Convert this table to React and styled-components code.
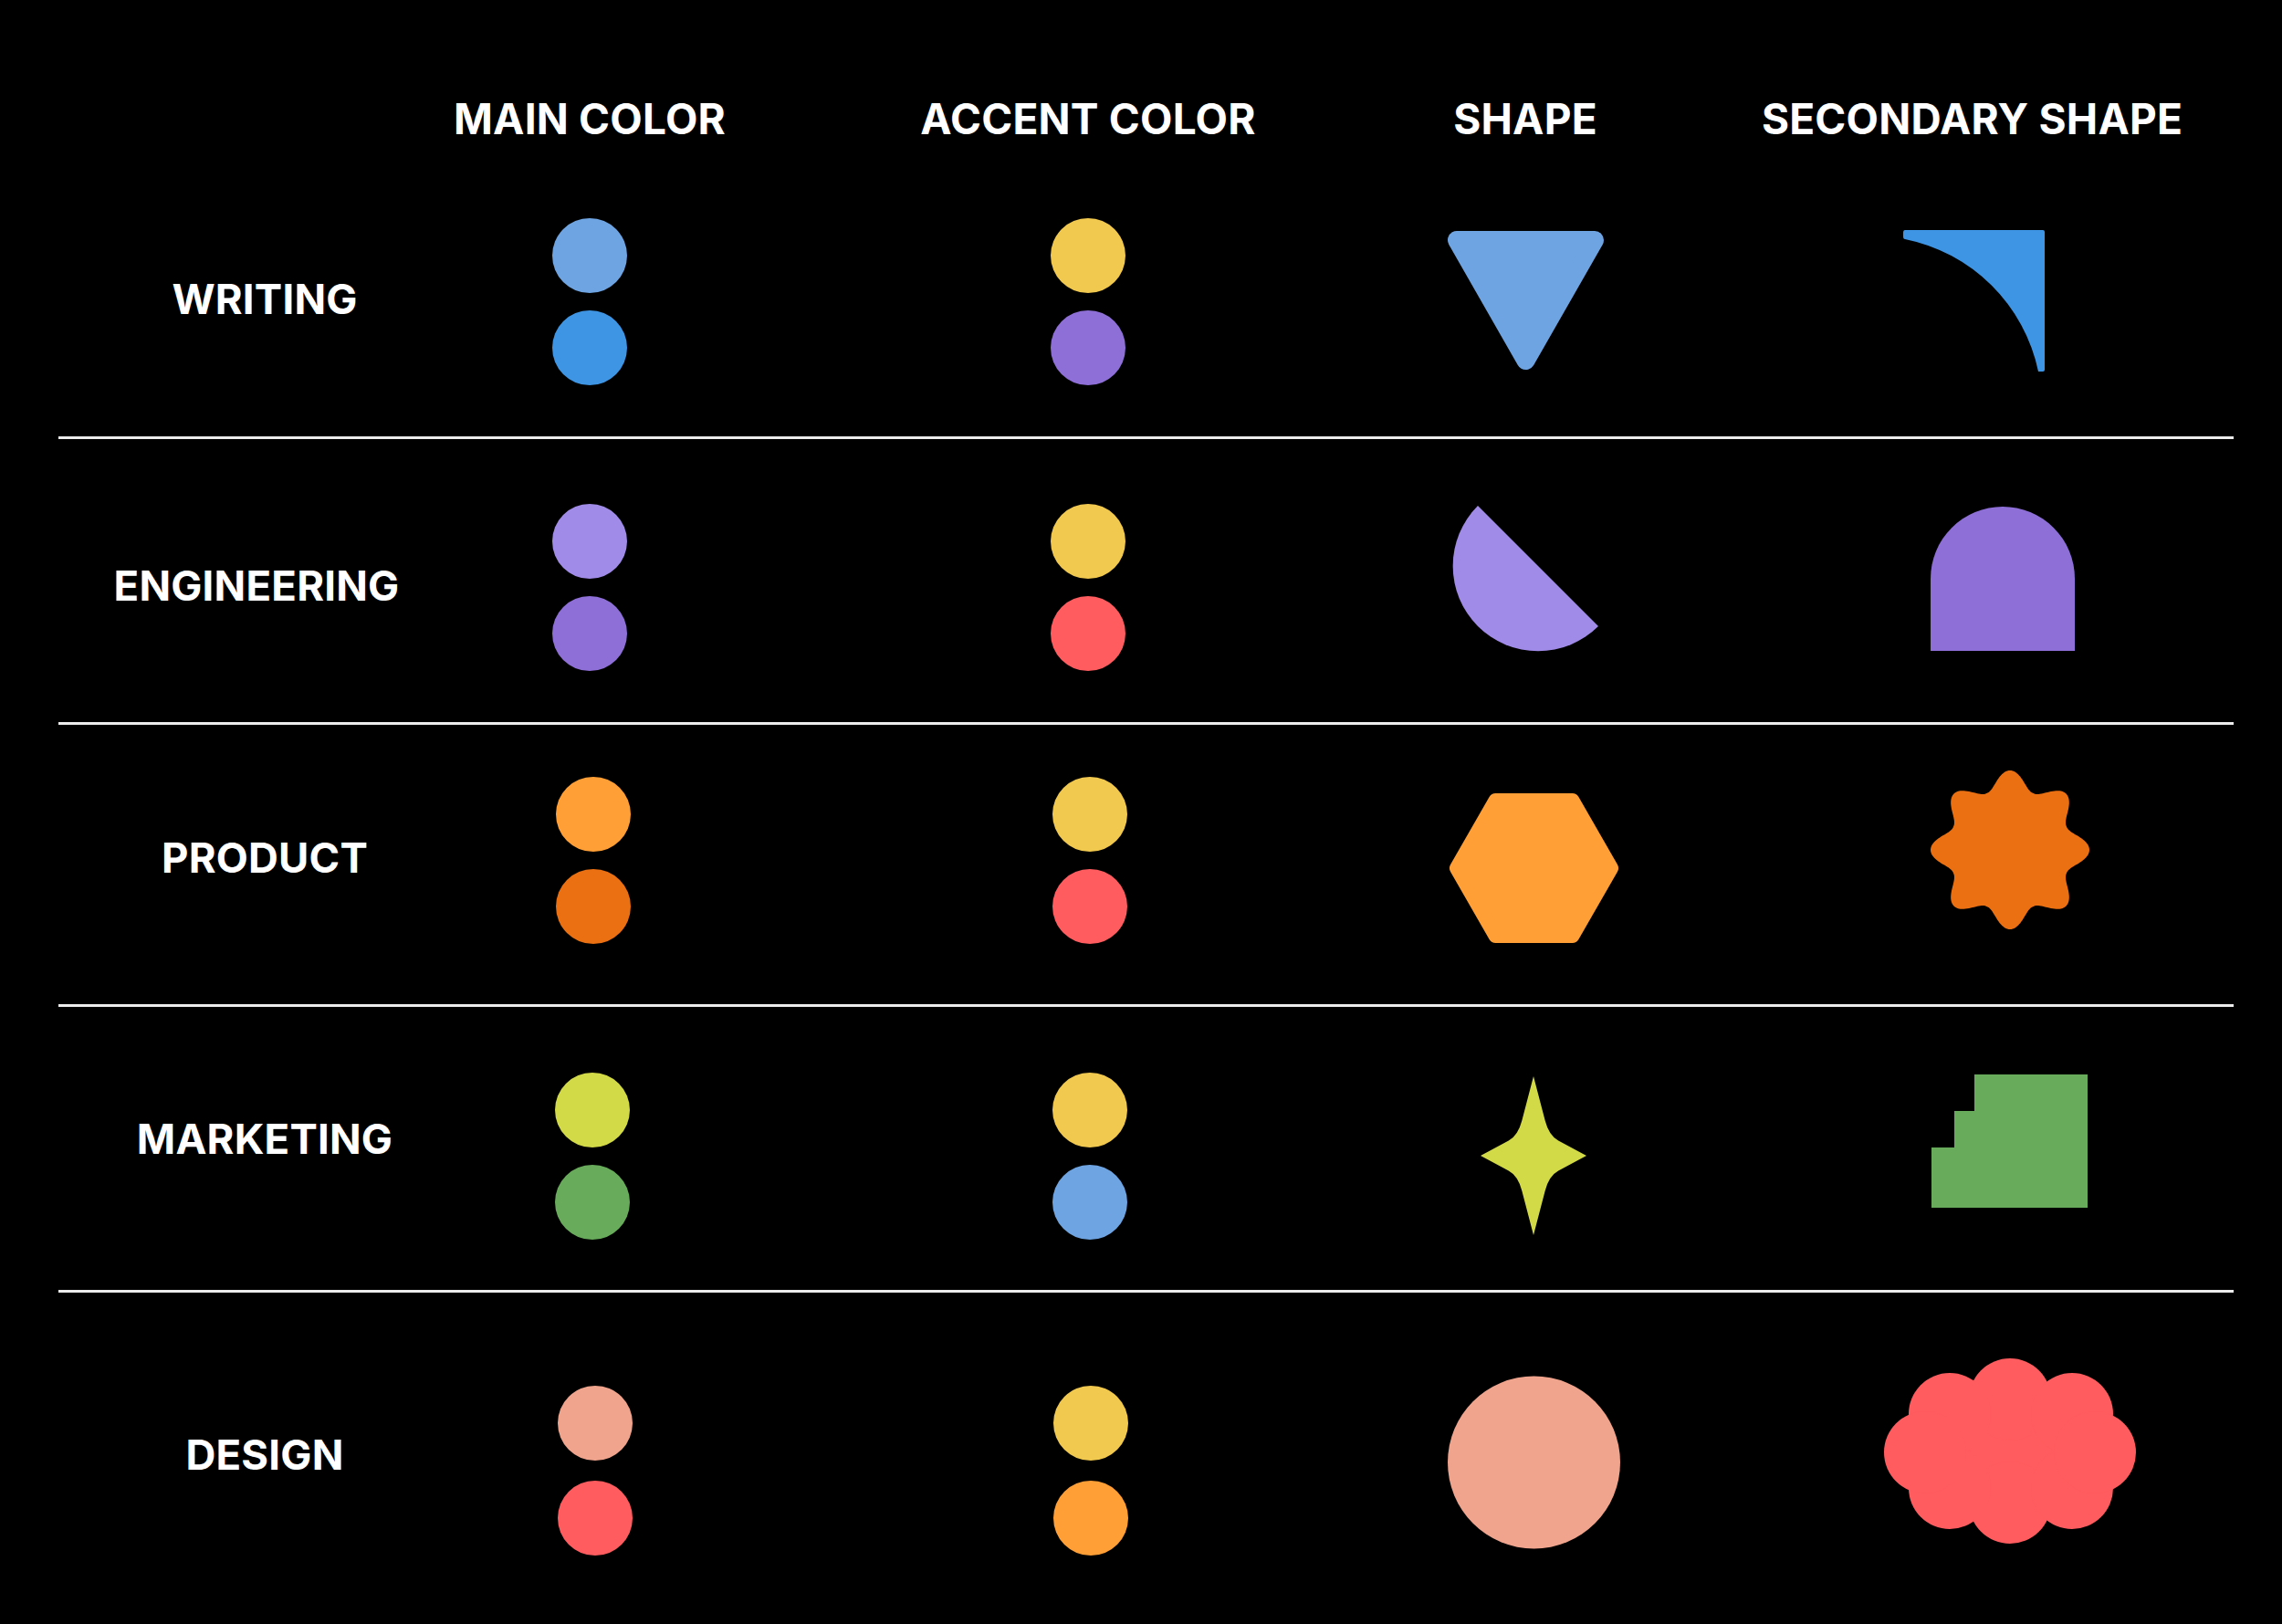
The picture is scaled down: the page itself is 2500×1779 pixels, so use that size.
import React from 'react';
import styled, { createGlobalStyle } from 'styled-components';

const Global = createGlobalStyle`
  html, body { margin: 0; padding: 0; background: #000; }
  body { font-family: Inter, "Liberation Sans", sans-serif; color: #fff; overflow: hidden; }
`;

const C = {
  lightBlue: '#6EA4E2',
  blue: '#3E95E4',
  yellow: '#F2C94F',
  purple: '#8E6FD8',
  lavender: '#A18BE8',
  red: '#FF5C5F',
  orange: '#FF9F36',
  darkOrange: '#EA7011',
  lime: '#D3DA48',
  green: '#68AC5B',
  salmon: '#F0A48D',
};

const COLS = '452px 260px 832px 126px 1fr';

const Page = styled.main`
  width: 2500px;
  height: 1779px;
  box-sizing: border-box;
  padding: 0 53px 0 64px;
  background: #000;
  display: flex;
  flex-direction: column;
`;

const HeaderRow = styled.header`
  display: grid;
  grid-template-columns: ${COLS};
  height: 75px;
  padding-top: 107px;
`;

const Cell = styled.div`
  display: flex;
  justify-content: center;
  align-items: ${p => (p.$top ? 'flex-start' : 'center')};
  min-width: 0;
  padding-left: ${p => p.$pl || 0}px;
`;

const HeadLabel = styled.h2`
  margin: 0;
  font-size: 46px;
  line-height: 1;
  font-weight: 700;
  letter-spacing: 0.2px;
  white-space: nowrap;
  color: #fff;
`;

const Row = styled.section`
  display: grid;
  grid-template-columns: ${COLS};
  height: ${p => p.$h}px;
  flex: ${p => (p.$grow ? '1' : 'none')};
  border-bottom: ${p => (p.$last ? 'none' : '3px solid #ececec')};
`;

const RowLabel = styled.h3`
  margin: ${p => p.$dy}px ${p => -p.$dx}px ${p => -p.$dy}px ${p => p.$dx}px;
  font-size: 45.5px;
  line-height: normal;
  font-weight: 700;
  letter-spacing: 0.2px;
  white-space: nowrap;
  color: #fff;
`;

const Swatches = styled.div`
  display: flex;
  flex-direction: column;
  gap: ${p => p.$gap}px;
  margin: ${p => p.$dy}px ${p => -p.$dx}px ${p => -p.$dy}px ${p => p.$dx}px;
`;

const Dot = styled.span`
  display: block;
  width: 82px;
  height: 82px;
  border-radius: 50%;
  background: ${p => p.$color};
`;

const ShapeSvg = styled.svg`
  display: block;
  flex: none;
  overflow: visible;
`;

/* ---------- shape drawings ---------- */

function blobPath(cx, cy, rin, rout, n, pw, steps = 360) {
  let d = '';
  for (let i = 0; i <= steps; i++) {
    const t = (i / steps) * Math.PI * 2;
    const f = Math.pow((1 + Math.cos(n * t)) / 2, pw);
    const r = rin + (rout - rin) * f;
    const a = t - Math.PI / 2;
    const x = (cx + r * Math.cos(a)).toFixed(2);
    const y = (cy + r * Math.sin(a)).toFixed(2);
    d += (i === 0 ? 'M' : 'L') + x + ' ' + y + ' ';
  }
  return d + 'Z';
}

function sparklePath(cx, cy, up, side, nx, ny, k = 0.75) {
  const tips = [
    [cx, cy - up],
    [cx + side, cy],
    [cx, cy + up],
    [cx - side, cy],
  ];
  const notches = [
    [cx + nx, cy - ny],
    [cx + nx, cy + ny],
    [cx - nx, cy + ny],
    [cx - nx, cy - ny],
  ];
  const lerp = (a, b) => [a[0] + k * (b[0] - a[0]), a[1] + k * (b[1] - a[1])];
  const f = p => p[0].toFixed(2) + ' ' + p[1].toFixed(2);
  let d = 'M' + f(tips[0]) + ' ';
  for (let i = 0; i < 4; i++) {
    const t0 = tips[i];
    const t1 = tips[(i + 1) % 4];
    const n = notches[i];
    const a = lerp(t0, n);
    const b = lerp(t1, n);
    d += 'L' + f(a) + ' Q' + f(n) + ' ' + f(b) + ' L' + f(t1) + ' ';
  }
  return d + 'Z';
}

const Triangle = ({ color }) => (
  <polygon
    points="45,53 196,53 120.5,185"
    fill={color}
    stroke={color}
    strokeWidth="20"
    strokeLinejoin="round"
  />
);

const Quarter = ({ color }) => (
  <path
    d="M101 42 H252 Q254 42 254 44 V195 Q254 197 252 197 H247 A187 187 0 0 0 101 52 Q99 52 99 49 V45 Q99 42 101 42 Z"
    fill={color}
  />
);

const Wedge = ({ color }) => <path d="M68 38 A93 93 0 0 0 200 170 Z" fill={color} />;

const Arch = ({ color }) => (
  <path d="M129 197 V118 A79 79 0 0 1 287 118 V197 Z" fill={color} />
);

const Hexagon = ({ color }) => (
  <polygon
    points="45,124 87.5,50 171.5,50 214,124 171.5,198 87.5,198"
    fill={color}
    stroke={color}
    strokeWidth="16"
    strokeLinejoin="round"
  />
);

const WavyStar = ({ color }) => (
  <path d={blobPath(216, 104, 67, 87, 8, 1.1)} fill={color} />
);

const Sparkle = ({ color }) => (
  <path d={sparklePath(129, 128, 87, 58, 17, 22)} fill={color} />
);

const Steps = ({ color }) => (
  <path d="M177 39 H301 V185 H130 V119 H155 V79 H177 Z" fill={color} />
);

const Disc = ({ color }) => <circle cx="129.5" cy="124" r="94.5" fill={color} />;

const Cloud = ({ color }) => (
  <g fill={color}>
    <ellipse cx="216" cy="113" rx="110" ry="70" />
    {[
      [216, 55],
      [216, 168],
      [150, 71],
      [284, 71],
      [150, 152],
      [284, 152],
      [123, 113],
      [309, 113],
    ].map(([x, y]) => (
      <circle key={x + '-' + y} cx={x} cy={y} r="45" />
    ))}
  </g>
);

const rows = [
  {
    label: 'WRITING',
    h: 296,
    labelDy: -3,
    labelDx: 0,
    sw: { dy: 0, dx: 0, gap: 19 },
    main: [C.lightBlue, C.blue],
    accent: [C.yellow, C.purple],
    Shape: Triangle,
    shapeColor: C.lightBlue,
    Second: Quarter,
    secondColor: C.blue,
  },
  {
    label: 'ENGINEERING',
    h: 310,
    labelDy: 5,
    labelDx: -9,
    sw: { dy: 7, dx: 0, gap: 19 },
    main: [C.lavender, C.purple],
    accent: [C.yellow, C.red],
    Shape: Wedge,
    shapeColor: C.lavender,
    Second: Arch,
    secondColor: C.purple,
  },
  {
    label: 'PRODUCT',
    h: 306,
    labelDy: -8,
    labelDx: 0,
    sw: { dy: -5, dx: 4, gap: 19 },
    main: [C.orange, C.darkOrange],
    accent: [C.yellow, C.red],
    Shape: Hexagon,
    shapeColor: C.orange,
    Second: WavyStar,
    secondColor: C.darkOrange,
  },
  {
    label: 'MARKETING',
    h: 310,
    labelDy: -11,
    labelDx: 0,
    sw: { dy: 8, dx: 3, gap: 19 },
    main: [C.lime, C.green],
    accent: [C.yellow, C.lightBlue],
    Shape: Sparkle,
    shapeColor: C.lime,
    Second: Steps,
    secondColor: C.green,
  },
  {
    label: 'DESIGN',
    h: 363,
    labelDy: -4,
    labelDx: 0,
    sw: { dy: 13, dx: 6, gap: 22 },
    main: [C.salmon, C.red],
    accent: [C.yellow, C.orange],
    Shape: Disc,
    shapeColor: C.salmon,
    Second: Cloud,
    secondColor: C.red,
    last: true,
  },
];

const headers = ['MAIN COLOR', 'ACCENT COLOR', 'SHAPE', 'SECONDARY SHAPE'];

export default function App() {
  return (
    <>
      <Global />
      <Page>
        <HeaderRow>
          <Cell $top />
          {headers.map((h, i) => (
            <Cell key={h} $top $pl={i === headers.length - 1 ? 140 : 0}>
              <HeadLabel>{h}</HeadLabel>
            </Cell>
          ))}
        </HeaderRow>
        {rows.map(r => (
          <Row key={r.label} $h={r.h} $last={r.last} $grow={r.last}>
            <Cell>
              <RowLabel $dy={r.labelDy} $dx={r.labelDx}>
                {r.label}
              </RowLabel>
            </Cell>
            <Cell>
              <Swatches $dy={r.sw.dy} $dx={r.sw.dx} $gap={r.sw.gap}>
                {r.main.map((c, i) => (
                  <Dot key={i} $color={c} />
                ))}
              </Swatches>
            </Cell>
            <Cell>
              <Swatches $dy={r.sw.dy} $dx={r.sw.dx / 2} $gap={r.sw.gap}>
                {r.accent.map((c, i) => (
                  <Dot key={i} $color={c} />
                ))}
              </Swatches>
            </Cell>
            <Cell>
              <ShapeSvg width="240" height="240" viewBox="0 0 240 240">
                <r.Shape color={r.shapeColor} />
              </ShapeSvg>
            </Cell>
            <Cell $pl={150}>
              <ShapeSvg width="360" height="240" viewBox="0 0 360 240">
                <r.Second color={r.secondColor} />
              </ShapeSvg>
            </Cell>
          </Row>
        ))}
      </Page>
    </>
  );
}
